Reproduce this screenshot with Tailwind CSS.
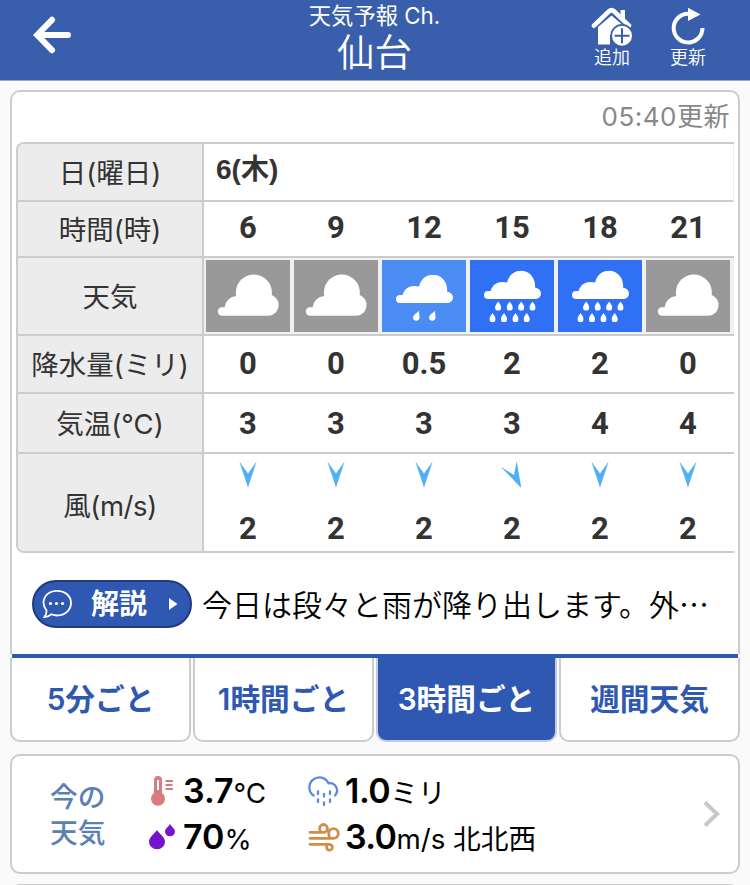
<!DOCTYPE html>
<html lang="ja">
<head>
<meta charset="utf-8">
<title>天気予報 Ch. 仙台</title>
<script src="https://cdn.jsdelivr.net/npm/@tailwindcss/browser@4"></script>
</head>
<body class="w-[750px] h-[885px] overflow-hidden bg-[#fafafa] font-['Inter','Noto_Sans_CJK_JP',sans-serif] text-[#333]">
<svg class="hidden">
  <defs>
    <symbol id="cloudy" viewBox="0 0 84 72">
      <path fill="#fff" d="M16 55.700A4.200 4.200 0 0 1 16 47.300L18.600 47.300A12.500 12.500 0 0 1 30.200 36A18 18 0 1 1 65.700 35A10.700 10.700 0 0 1 61.500 55.700Z"/>
    </symbol>
    <symbol id="raincloud" viewBox="0 0 57 29">
      <path fill="#fff" d="M4 28.500A4 4 0 0 1 4 20.500L6.600 20.500C8 15 13 11 19 11.600L23.200 11.900C24.500 5 30 0.300 37 0.300C45.500 0.300 51.500 7 51.300 17.400C54.500 17.400 57 20 57 23C57 26 54.500 28.500 51.500 28.500Z"/>
    </symbol>
    <symbol id="drop" viewBox="0 0 6 9"><path fill="#fff" d="M3 0C4.300 2 6 3.600 6 5.800A3 3.200 0 0 1 0 5.800C0 3.600 1.700 2 3 0Z"/></symbol>
    <symbol id="lightrain" viewBox="0 0 84 72">
      <use href="#raincloud" x="14" y="14.500" width="57" height="29"/>
      <path fill="#fff" d="M37 51C34 53.500 31 55 31 58A3.300 3.200 0 0 0 37.500 58C37.700 56 37 54 37 51ZM53 51C50 53.500 47 55 47 58A3.300 3.200 0 0 0 53.500 58C53.700 56 53 54 53 51Z"/>
    </symbol>
    <symbol id="heavyrain" viewBox="0 0 84 72">
      <use href="#raincloud" x="14" y="10.500" width="57" height="29"/>
      <use href="#drop" x="25" y="41.500" width="6.400" height="9.300"/><use href="#drop" x="36.500" y="41.500" width="6.400" height="9.300"/><use href="#drop" x="48" y="41.500" width="6.400" height="9.300"/><use href="#drop" x="59.300" y="41.500" width="6.400" height="9.300"/>
      <use href="#drop" x="19.300" y="53" width="6.400" height="9.300"/><use href="#drop" x="30.800" y="53" width="6.400" height="9.300"/><use href="#drop" x="42.300" y="53" width="6.400" height="9.300"/><use href="#drop" x="53.500" y="53" width="6.400" height="9.300"/>
    </symbol>
    <symbol id="wind" viewBox="0 0 18 27"><path fill="#4eb1f5" d="M.4.500L9 12.500L17.600.500L9 26.500Z"/></symbol>
  </defs>
</svg>

<header class="h-[81px] bg-[#395eab] border-b border-[#a5a5b0] text-white grid grid-cols-[250px_249px_251px]">
  <div class="pl-[32px] pt-[16px]">
    <svg width="39" height="38" viewBox="0 0 39 38" fill="none" stroke="#fff" stroke-width="6" stroke-linecap="round" stroke-linejoin="miter"><path d="M20 3.800L5.200 19L20 34.200M6 19H36"/></svg>
  </div>
  <div class="text-center font-normal pt-px">
    <p class="text-[22.300px] leading-[29px]">天気予報 Ch.</p>
    <h1 class="text-[37.500px] leading-[46px] font-[350]">仙台</h1>
  </div>
  <div class="flex font-[350] text-[18px] leading-[20px] pl-[83px] pt-[7px]">
    <div class="w-[60px] flex flex-col items-center">
      <svg width="42" height="40" viewBox="0 0 42 40"><path fill="#fff" d="M7 20L20.500 8.500L34 20V37.500H26V28H19V37.500H7Z"/><path fill="#395eab" d="M0 23L20 5L42 24V17L20 0L0 17Z"/><path d="M3 18.700L18 4.300Q20.500 2.200 23 4.300L38 18.700" fill="none" stroke="#fff" stroke-width="4.600" stroke-linecap="round"/><path fill="#fff" d="M29.500 3H34V14L29.500 10Z"/><circle cx="31" cy="28.700" r="11.700" fill="#395eab"/><circle cx="31" cy="28.700" r="10" fill="#fff"/><path d="M31 21.200V36.200M23.500 28.700H38.500" stroke="#395eab" stroke-width="2"/></svg>
      <span class="mt-px">追加</span>
    </div>
    <div class="w-[60px] ml-[16px] flex flex-col items-center">
      <svg width="36" height="40" viewBox="0 0 36 40"><path d="M18.500 6.700A14.400 14.400 0 1 0 32.500 21" fill="none" stroke="#fff" stroke-width="4"/><path fill="#fff" d="M18 .8L30.500 7.400L18 14Z"/></svg>
      <span class="mt-px">更新</span>
    </div>
  </div>
</header>

<main class="px-[10px] pt-[9px]">
  <section>
    <div class="h-[564px] bg-white border-2 border-b-0 border-[#ccc] rounded-t-[10px] pl-[4px] pr-[4px]">
      <p class="h-[50px] flex items-center justify-end pr-[4px] text-[26px] tracking-[0.500px] font-normal text-[#888] leading-none"><span>05:40更新</span></p>
      <div class="h-[411px] rounded-l-[8px] border-2 border-r-0 border-[#ccc] overflow-hidden grid grid-cols-[186px_1fr]">
        <div class="bg-[#ececec] border-r-2 border-[#ccc] text-[27.500px] font-normal text-center flex flex-col leading-none whitespace-nowrap">
          <div class="h-[58px] border-b-2 border-[#ccc] flex items-center justify-center pt-[4px]"><span>日(曜日)</span></div>
          <div class="h-[56px] border-b-2 border-[#ccc] flex items-center justify-center pt-[3px]"><span>時間(時)</span></div>
          <div class="h-[78px] border-b-2 border-[#ccc] flex items-center justify-center pt-[3px]"><span>天気</span></div>
          <div class="h-[58px] border-b-2 border-[#ccc] flex items-center justify-center pt-[4px]"><span>降水量(ミリ)</span></div>
          <div class="h-[60px] border-b-2 border-[#ccc] flex items-center justify-center pt-[4px]"><span>気温(℃)</span></div>
          <div class="h-[97px] flex items-center justify-center pt-[8px] tracking-[-0.400px]"><span>風(m/s)</span></div>
        </div>
        <div class="font-bold text-[31px] leading-none text-center flex flex-col font-['Roboto','Noto_Sans_CJK_JP',sans-serif]">
          <div class="h-[58px] border-b-2 border-[#ccc] border-r border-r-[#eee] flex items-center pl-[12px] pb-[5px] text-[28px] font-['Liberation_Sans','Noto_Sans_CJK_JP',sans-serif]"><span>6(木)</span></div>
          <div class="h-[56px] border-b-2 border-[#ccc] grid grid-cols-[repeat(6,88px)] items-center pb-[4px]"><span>6</span><span>9</span><span>12</span><span>15</span><span>18</span><span>21</span></div>
          <div class="h-[78px] border-b-2 border-[#ccc] bg-[#f0f0f0] grid grid-cols-[repeat(6,84px)] gap-x-[4px] pl-[2px] py-[2px]">
            <div class="bg-[#999]"><svg class="w-[84px] h-[72px]"><use href="#cloudy"/></svg></div>
            <div class="bg-[#999]"><svg class="w-[84px] h-[72px]"><use href="#cloudy"/></svg></div>
            <div class="bg-[#4b8df5]"><svg class="w-[84px] h-[72px]"><use href="#lightrain"/></svg></div>
            <div class="bg-[#2f70f5]"><svg class="w-[84px] h-[72px]"><use href="#heavyrain"/></svg></div>
            <div class="bg-[#2f70f5]"><svg class="w-[84px] h-[72px]"><use href="#heavyrain"/></svg></div>
            <div class="bg-[#999]"><svg class="w-[84px] h-[72px]"><use href="#cloudy"/></svg></div>
          </div>
          <div class="h-[58px] border-b-2 border-[#ccc] grid grid-cols-[repeat(6,88px)] items-center pb-[2px]"><span>0</span><span>0</span><span>0.5</span><span>2</span><span>2</span><span>0</span></div>
          <div class="h-[60px] border-b-2 border-[#ccc] grid grid-cols-[repeat(6,88px)] items-center"><span>3</span><span>3</span><span>3</span><span>3</span><span>4</span><span>4</span></div>
          <div class="h-[97px] grid grid-cols-[repeat(6,88px)] grid-rows-[42px_55px] justify-items-center pt-[7px]">
            <svg class="w-[18px] h-[27px]"><use href="#wind"/></svg>
            <svg class="w-[18px] h-[27px]"><use href="#wind"/></svg>
            <svg class="w-[18px] h-[27px]"><use href="#wind"/></svg>
            <svg class="w-[22px] h-[28px] -ml-[3px]" viewBox="0 0 22 28"><path fill="#4eb1f5" d="M.5 5.500L14 14L16.700.300L21.300 27Z"/></svg>
            <svg class="w-[18px] h-[27px]"><use href="#wind"/></svg>
            <svg class="w-[18px] h-[27px]"><use href="#wind"/></svg>
            <span class="pt-[10px]">2</span><span class="pt-[10px]">2</span><span class="pt-[10px]">2</span><span class="pt-[10px]">2</span><span class="pt-[10px]">2</span><span class="pt-[10px]">2</span>
          </div>
        </div>
      </div>
      <div class="h-[101px] flex items-center pl-[16px]">
        <div class="w-[160px] h-[48px] shrink-0 rounded-full bg-[#2e58b1] border-2 border-[#1e3b7c] flex items-center text-white">
          <svg class="ml-[7px] shrink-0" width="32" height="30" viewBox="0 0 32 30"><path d="M5.500 21.500C-1.500 12 5 1.800 16 1.800C24 1.800 30 7 30 14C30 21 24 26.500 16 26.500C13.500 26.500 12 26 10.500 25.300C8 27.300 6 28 3.500 28C5 26 5.700 24 5.500 21.500Z" fill="none" stroke="#fff" stroke-width="1.800"/><g fill="#fff"><circle cx="9.500" cy="14.500" r="1.600"/><circle cx="15.500" cy="14.500" r="1.600"/><circle cx="21.500" cy="14.500" r="1.600"/></g></svg>
          <span class="ml-[18px] text-[28px] leading-none font-bold whitespace-nowrap">解説</span>
          <svg class="ml-[22px] shrink-0" width="9" height="12" viewBox="0 0 9 12"><path fill="#fff" d="M0 0L8.500 6L0 12Z"/></svg>
        </div>
        <p class="ml-[10px] text-[30px] leading-none font-[350] text-black whitespace-nowrap">今日は段々と雨が降り出します。外<span class="font-['Noto_Sans_CJK_JP']">⋯</span></p>
      </div>
    </div>
    <div class="h-[4px] mx-[2px] bg-[#2e58b1]"></div>
    <nav class="h-[84px] grid grid-cols-4 gap-x-[2px] text-[29.700px] leading-none font-bold text-[#2e58b1] font-['Inter','Noto_Sans_CJK_JP',sans-serif] whitespace-nowrap">
      <a class="bg-white border-2 border-t-0 border-[#ccc] rounded-b-[10px] flex items-center justify-center pt-[2px]"><span><span class="font-semibold">5</span>分ごと</span></a>
      <a class="bg-white border-2 border-t-0 border-[#ccc] rounded-b-[10px] flex items-center justify-center pt-[2px]"><span><span class="font-semibold">1</span>時間ごと</span></a>
      <a class="bg-[#2e58b1] text-white border-2 border-t-0 border-[#c3cae2] rounded-b-[10px] flex items-center justify-center pt-[2px]"><span><span class="font-semibold">3</span>時間ごと</span></a>
      <a class="bg-white border-2 border-t-0 border-[#ccc] rounded-b-[10px] flex items-center justify-center pt-[2px]">週間天気</a>
    </nav>
  </section>

  <section class="mt-[12px] h-[120px] bg-white border-2 border-[#ccc] rounded-[10px] flex items-center text-black">
    <h2 class="ml-[38px] w-[98px] text-[27.700px] leading-[36px] font-medium text-[#5b80b4] pt-px">今の<br>天気</h2>
    <div class="grid grid-cols-[35px_125px_37px_1fr] grid-rows-[46px_46px] items-center text-[27.700px] font-normal leading-none whitespace-nowrap">
      <svg width="26" height="32" viewBox="0 0 26 32"><path fill="#d87c80" d="M6 18V5A3.500 3.500 0 0 1 14 5V18A7 7 0 1 1 6 18Z"/><path d="M10 5V15" stroke="#fff" stroke-width="2"/><path d="M17.500 6H25M17.500 10H24.500M17.500 14H25" stroke="#d87c80" stroke-width="2"/></svg>
      <p><b class="text-[34px] font-semibold">3.7</b>℃</p>
      <svg width="32" height="32" viewBox="0 0 32 32" fill="none" stroke="#5d8ad9" stroke-width="2.300" stroke-linecap="round"><path d="M5.500 20.500A10 10 0 1 1 20.500 8.300A7.300 7.300 0 0 1 27 20.500M10 16.500V19M16 19V21.500M22 16.500V19M10 24.500V27M16 27.500V30M22 24.500V27"/></svg>
      <p><b class="text-[34px] font-semibold tracking-[-0.500px]">1.0</b>ミリ</p>
      <svg width="28" height="28" viewBox="0 0 28 28" fill="#7414cc"><path d="M9 7C11.500 11 17 14 17 18.800A8 7.500 0 0 1 1 18.800C1 14 6.500 11 9 7ZM22 1C23.500 4 27 5.800 27 8.500A5 4.800 0 0 1 17 8.500C17 5.800 20.500 4 22 1Z"/></svg>
      <p><b class="text-[34px] font-semibold">70</b>%</p>
      <svg width="32" height="30" viewBox="0 0 32 30" fill="none" stroke="#d18d49" stroke-width="2.800" stroke-linecap="round"><path d="M2 10.300H15.500A3.900 3.900 0 1 0 11.600 6.400Q11.600 9 13.500 10.300M2 16.300H25.500A4.800 4.800 0 1 0 20.700 11.500Q20.700 14.500 22.500 16.300M2 22.300H21.500A2.900 2.900 0 1 1 18.600 25.200Q18.600 23.500 20 22.300"/></svg>
      <p><b class="text-[34px] font-semibold tracking-[-0.600px]">3.0</b>m/s 北北西</p>
    </div>
    <svg class="ml-auto mr-[17px]" width="18" height="28" viewBox="0 0 18 28"><path d="M2 2.500L14 14L2 25.500" fill="none" stroke="#c7c7cc" stroke-width="4"/></svg>
  </section>
  <div class="mt-[10px] h-[30px] bg-white border-2 border-[#ccc] rounded-[10px]"></div>
</main>
</body>
</html>
